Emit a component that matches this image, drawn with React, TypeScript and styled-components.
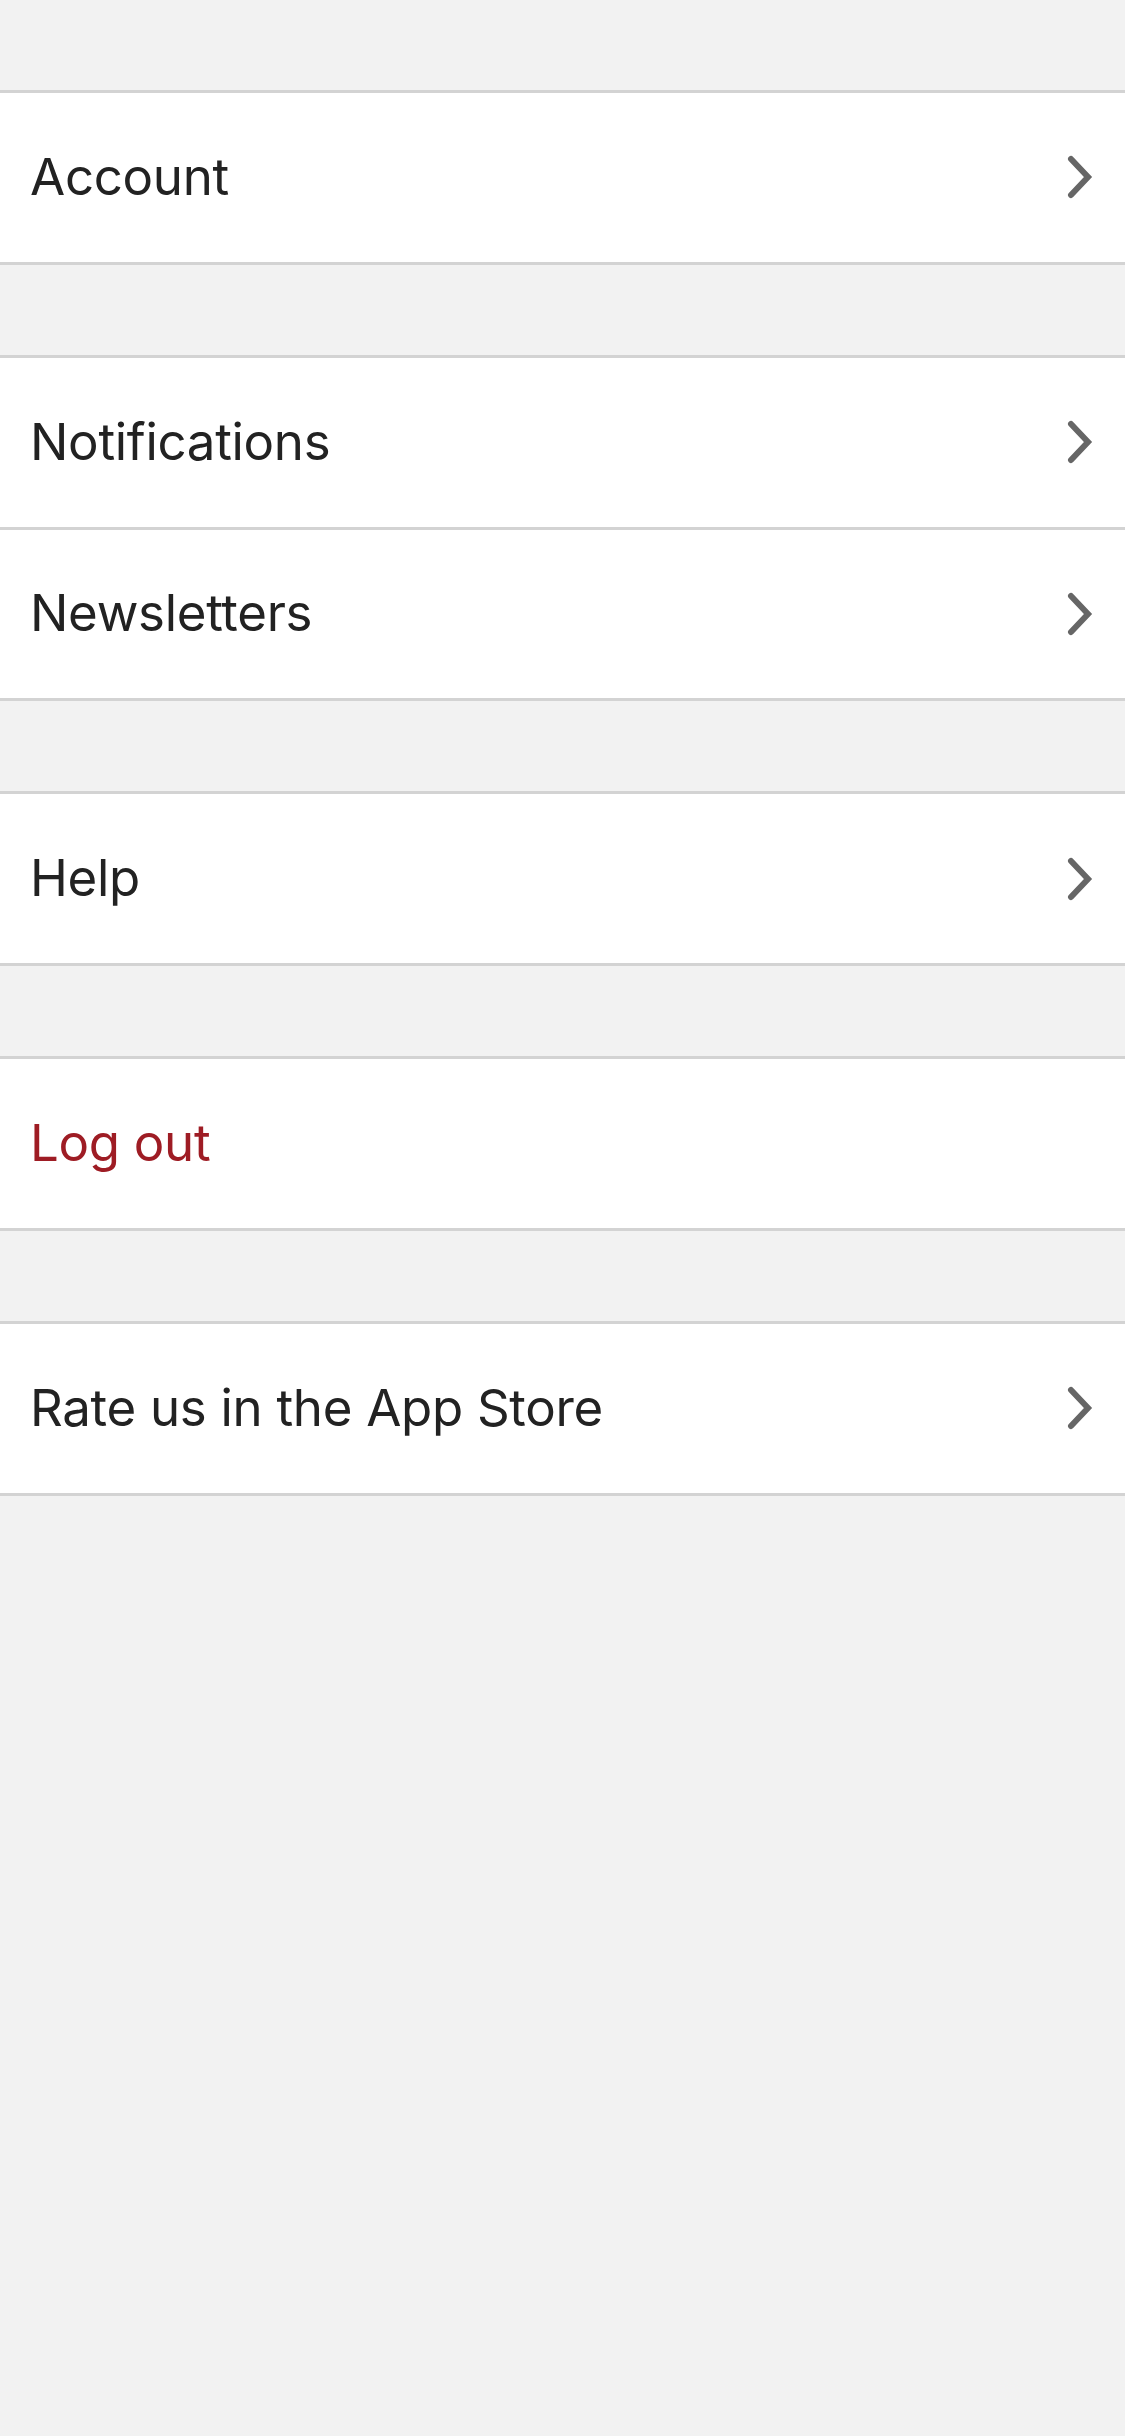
import React from 'react';
import styled, { createGlobalStyle } from 'styled-components';

const GlobalStyle = createGlobalStyle`
  html, body {
    margin: 0;
    padding: 0;
    background-color: #f2f2f2;
  }
  body {
    font-family: 'Inter', 'Noto Sans', sans-serif;
    -webkit-font-smoothing: antialiased;
  }
`;

type Item = { label: string; danger?: boolean; chevron?: boolean };

const groups: Item[][] = [
  [{ label: 'Account', chevron: true }],
  [
    { label: 'Notifications', chevron: true },
    { label: 'Newsletters', chevron: true },
  ],
  [{ label: 'Help', chevron: true }],
  [{ label: 'Log out', danger: true }],
  [{ label: 'Rate us in the App Store', chevron: true }],
];

const Chevron = () => (
  <ChevronSvg viewBox="0 0 26 44" aria-hidden="true">
    <polyline points="4,4 21,22 4,40" />
  </ChevronSvg>
);

const App = () => {
  return (
    <>
      <GlobalStyle />
      <Page>
        {groups.map((group, gi) => (
          <Group key={gi}>
            {group.map((item) => (
              <Row key={item.label}>
                <Label $danger={item.danger}>{item.label}</Label>
                {item.chevron && <Chevron />}
              </Row>
            ))}
          </Group>
        ))}
      </Page>
    </>
  );
};

export default App;

const Page = styled.div`
  display: flex;
  flex-direction: column;
  gap: 90px;
  padding-top: 90px;
  min-height: 2436px;
  box-sizing: border-box;
  background-color: #f2f2f2;
`;

const Group = styled.div`
  display: flex;
  flex-direction: column;
  background-color: #ffffff;
  border-top: 3px solid #d3d3d3;
`;

const Row = styled.div`
  display: flex;
  align-items: center;
  justify-content: space-between;
  height: 168.75px;
  padding: 0 32px 0 30px;
  border-bottom: 3px solid #d3d3d3;
`;

const Label = styled.span<{ $danger?: boolean }>`
  font-size: 51px;
  font-weight: 400;
  letter-spacing: -0.3px;
  line-height: 1;
  padding-bottom: 2px;
  color: ${(p) => (p.$danger ? '#9e1c24' : '#222222')};
`;

const ChevronSvg = styled.svg`
  width: 26px;
  height: 44px;
  fill: none;
  stroke: #666666;
  stroke-width: 6;
  stroke-linecap: round;
  stroke-linejoin: miter;
`;
